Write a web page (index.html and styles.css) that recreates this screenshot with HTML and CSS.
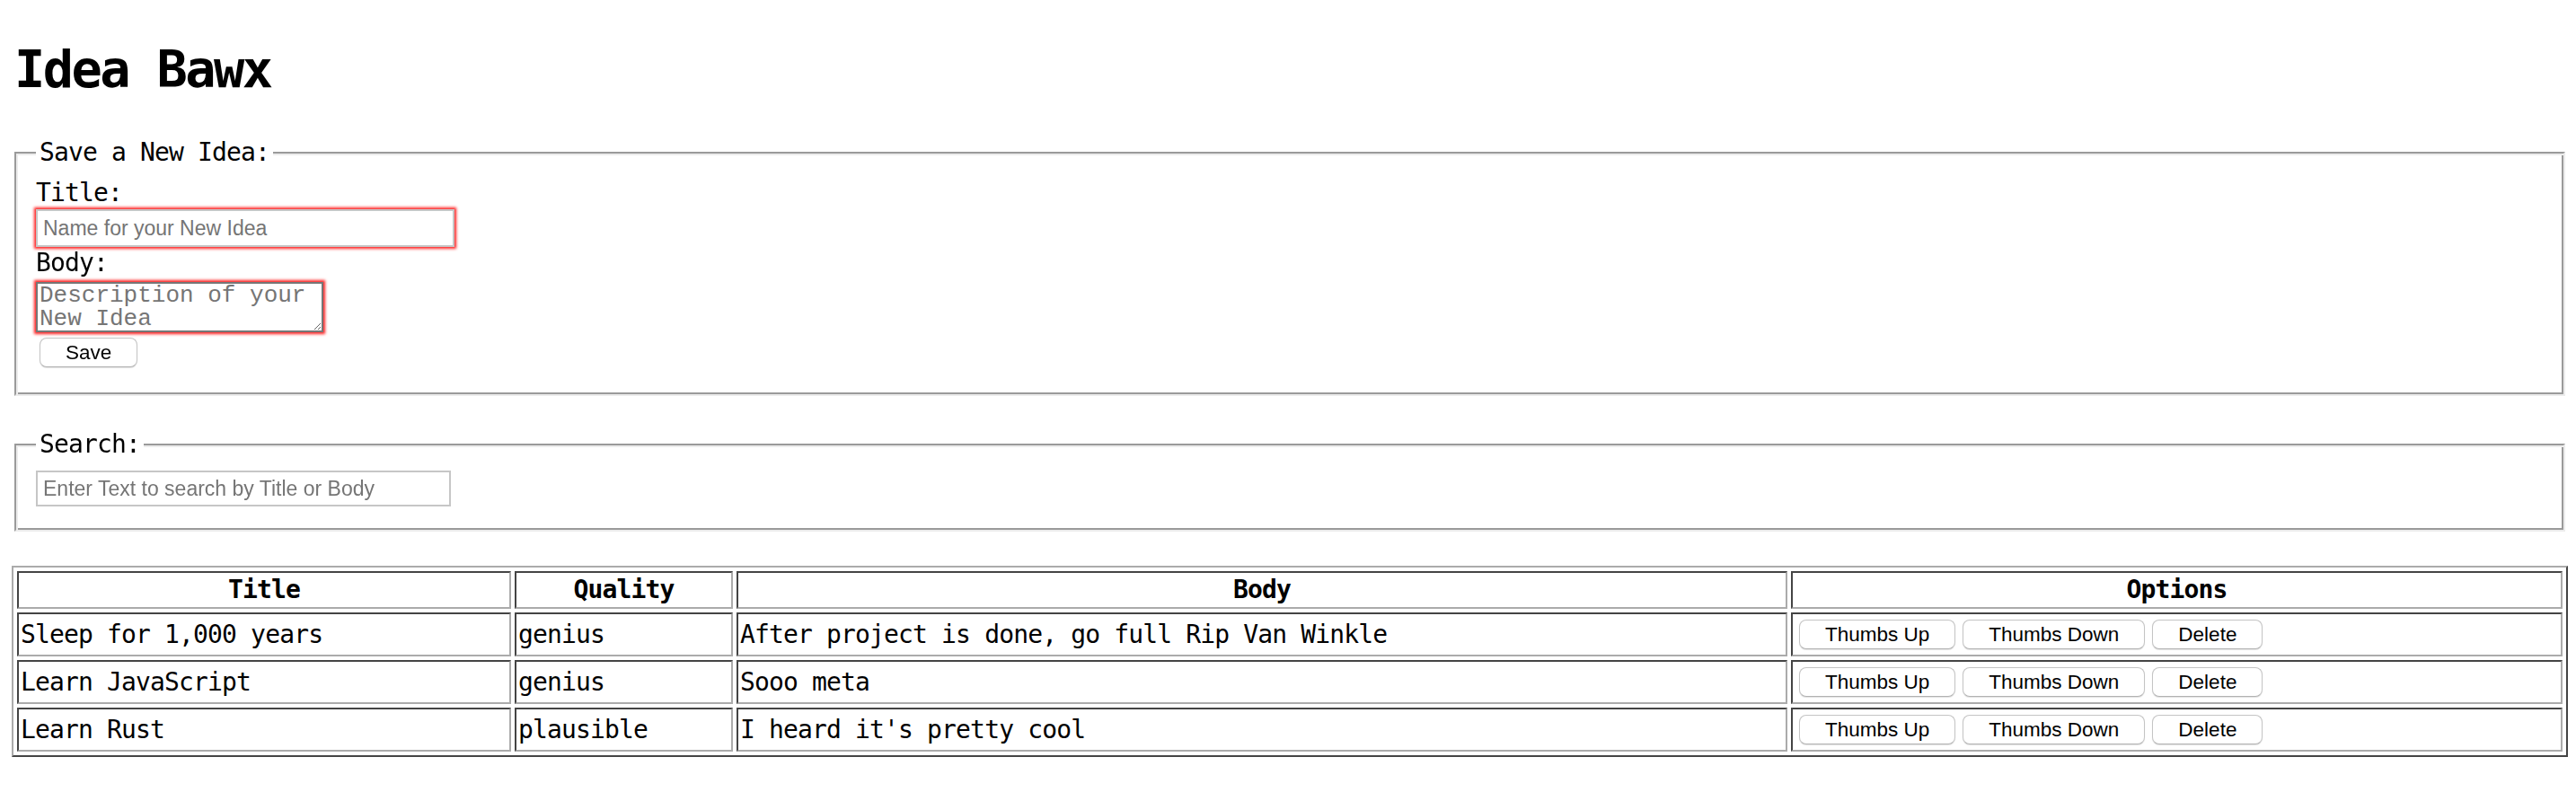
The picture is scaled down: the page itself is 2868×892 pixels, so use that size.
FILE: index.html
```html
<!DOCTYPE html>
<html lang="en">
<head>
<meta charset="utf-8">
<title>Idea Bawx</title>
<link rel="stylesheet" href="styles.css">
</head>
<body>
<div class="page">
  <h1 class="app-title">Idea Bawx</h1>

  <fieldset class="box box-new">
    <legend class="box-legend">Save a New Idea:</legend>
    <label class="field-label" for="idea-title">Title:</label>
    <input id="idea-title" class="text-input title-input invalid" type="text" placeholder="Name for your New Idea">
    <label class="field-label label-body" for="idea-body">Body:</label>
    <textarea id="idea-body" class="text-area invalid" placeholder="Description of your New Idea"></textarea>
    <button class="btn btn-save" type="button">Save</button>
  </fieldset>

  <fieldset class="box box-search">
    <legend class="box-legend">Search:</legend>
    <input class="text-input search-input" type="text" placeholder="Enter Text to search by Title or Body">
  </fieldset>

  <table class="ideas">
    <thead>
      <tr>
        <th class="col-title">Title</th>
        <th class="col-quality">Quality</th>
        <th class="col-body">Body</th>
        <th class="col-options">Options</th>
      </tr>
    </thead>
    <tbody>
      <tr>
        <td>Sleep for 1,000 years</td>
        <td>genius</td>
        <td>After project is done, go full Rip Van Winkle</td>
        <td><div class="actions"><button class="btn" type="button">Thumbs Up</button><button class="btn" type="button">Thumbs Down</button><button class="btn" type="button">Delete</button></div></td>
      </tr>
      <tr>
        <td>Learn JavaScript</td>
        <td>genius</td>
        <td>Sooo meta</td>
        <td><div class="actions"><button class="btn" type="button">Thumbs Up</button><button class="btn" type="button">Thumbs Down</button><button class="btn" type="button">Delete</button></div></td>
      </tr>
      <tr>
        <td>Learn Rust</td>
        <td>plausible</td>
        <td>I heard it's pretty cool</td>
        <td><div class="actions"><button class="btn" type="button">Thumbs Up</button><button class="btn" type="button">Thumbs Down</button><button class="btn" type="button">Delete</button></div></td>
      </tr>
    </tbody>
  </table>
</div>
</body>
</html>
```

FILE: styles.css
```css
html, body {
  margin: 0;
  padding: 0;
  background: #fff;
}

body {
  font-family: "DejaVu Sans Mono", monospace;
  font-size: 28px;
  letter-spacing: -0.85px;
  color: #000;
}

.page {
  padding: 44px 9px 40px 13px;
}

.app-title {
  margin: 0 0 0 3px;
  font-size: 57px;
  line-height: 66px;
  font-weight: bold;
  letter-spacing: -2.6px;
}

/* fieldsets with a groove-like double border */
.box {
  margin: 0 3px;
  border: 2px solid;
  border-color: #9a9a9a #ececec #ececec #9a9a9a;
  box-shadow: inset 2px 2px 0 #ececec, inset -2px -2px 0 #9a9a9a;
  padding: 15px 22px 30px 22px;
  min-width: 0;
}

.box-new {
  margin-top: 45px;
}

.box-search {
  margin-top: 39px;
  padding-top: 14px;
  padding-bottom: 26px;
}

.box-legend {
  padding: 0 4px;
  line-height: 30px;
  background: #fff;
}

.field-label {
  display: block;
  line-height: 30px;
}

.label-body {
  margin-top: 3px;
}

.text-input {
  display: block;
  box-sizing: border-box;
  font-family: "Liberation Sans", Arial, sans-serif;
  font-size: 23px;
  letter-spacing: normal;
  color: #000;
  background: #fff;
  border: 2px solid #c6c6c6;
  padding: 0 6px;
  margin: 0;
  outline: none;
}

.text-input::placeholder,
.text-area::placeholder {
  color: #757575;
}

.title-input {
  width: 466px;
  height: 42px;
  margin-top: 3px;
}

.search-input {
  width: 462px;
  height: 40px;
}

.text-area {
  display: block;
  box-sizing: border-box;
  width: 320px;
  height: 56px;
  margin: 6px 0 0 0;
  padding: 0 2px;
  border: 2px solid #767676;
  font-family: "Liberation Mono", "Courier New", monospace;
  font-size: 26px;
  line-height: 26px;
  letter-spacing: normal;
  color: #000;
  background: #fff;
  outline: none;
}

.invalid {
  box-shadow: 0 0 3px 2px #ff2020;
}

.btn {
  box-sizing: border-box;
  height: 33px;
  margin: 0 4px;
  padding: 0 28px;
  font-family: "Liberation Sans", Arial, sans-serif;
  font-size: 22.5px;
  letter-spacing: normal;
  line-height: 31px;
  color: #000;
  background: #fff;
  border: 1px solid #c4c4c4;
  border-bottom-color: #b2b2b2;
  border-radius: 8px;
  box-shadow: 0 1px 1px rgba(0, 0, 0, 0.12);
  white-space: nowrap;
}

.btn-save {
  display: block;
  margin-top: 6px;
}

/* ideas table */
.ideas {
  width: 100%;
  margin-top: 38px;
  table-layout: fixed;
  border-collapse: separate;
  border-spacing: 4px;
  border: 2px solid;
  border-color: #ababab #444 #444 #ababab;
}

.ideas th,
.ideas td {
  box-sizing: border-box;
  border: 2px solid;
  border-color: #444 #ababab #ababab #444;
  padding: 2px;
  white-space: nowrap;
  overflow: hidden;
}

.ideas th {
  font-weight: bold;
  text-align: center;
  line-height: 34px;
}

.ideas td {
  text-align: left;
  line-height: 41px;
  vertical-align: middle;
}

.col-title { width: 550px; }
.col-quality { width: 243px; }
.col-body { width: 1170px; }
.col-options { width: 859px; }

.actions {
  display: flex;
  align-items: center;
  padding-left: 1px;
}
```
